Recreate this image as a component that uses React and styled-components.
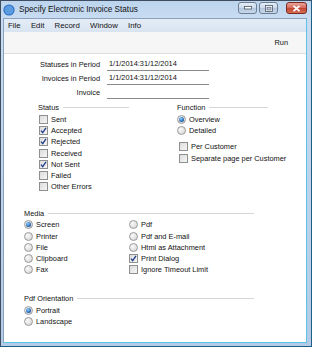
import React from 'react';
import styled, { createGlobalStyle } from 'styled-components';

const GlobalStyle = createGlobalStyle`
  html, body {
    margin: 0;
    padding: 0;
    background: #fff;
  }
  body {
    font-family: "Liberation Sans", Arial, sans-serif;
  }
`;

function Check(props) {
  const { checked } = props;
  return (
    <Box>
      {checked && (
        <svg width="7" height="7" viewBox="0 0 7 7">
          <path d="M1 3.6 L2.7 5.6 L6 0.8" fill="none" stroke="#1f3d8a" strokeWidth="1.3" />
        </svg>
      )}
    </Box>
  );
}

function Radio(props) {
  const { checked } = props;
  return <Circle>{checked && <Dot />}</Circle>;
}

function Option(props) {
  const { type, checked, label } = props;
  return (
    <Item>
      {type === 'radio' ? <Radio checked={checked} /> : <Check checked={checked} />}
      <span>{label}</span>
    </Item>
  );
}

function App() {
  return (
    <Window>
      <GlobalStyle />
      <TitleBar>
        <svg width="12" height="12" viewBox="0 0 12 12">
          <circle cx="6" cy="6" r="5.6" fill="#2a6bc4" />
          <circle cx="6" cy="6" r="4.6" fill="#5b9be0" />
          <path d="M3.2 3.4 A4 4 0 0 0 8.8 9.2 A3.2 3.2 0 0 1 3.2 3.4 Z" fill="#fff" />
        </svg>
        <Title>Specify Electronic Invoice Status</Title>
        <Controls>
          <CtrlButton>
            <svg width="8" height="4" viewBox="0 0 8 4">
              <rect x="0.5" y="0.5" width="7" height="2.5" fill="#fff" stroke="#4a5868" strokeWidth="0.8" />
            </svg>
          </CtrlButton>
          <CtrlButton>
            <svg width="8" height="7" viewBox="0 0 8 7">
              <rect x="0.5" y="0.5" width="7" height="6" fill="#fff" stroke="#4a5868" strokeWidth="0.8" />
              <rect x="2" y="2.2" width="4" height="2.8" fill="#b8c8da" stroke="#4a5868" strokeWidth="0.6" />
            </svg>
          </CtrlButton>
          <CloseButton>
            <svg width="9" height="7" viewBox="0 0 9 7">
              <path d="M1.5 0.8 L7.5 6.2 M7.5 0.8 L1.5 6.2" stroke="#fff" strokeWidth="1.8" />
            </svg>
          </CloseButton>
        </Controls>
      </TitleBar>

      <Client>
        <MenuBar>
          <span>File</span>
          <span>Edit</span>
          <span>Record</span>
          <span>Window</span>
          <span>Info</span>
        </MenuBar>
        <Toolbar>
          <span>Run</span>
        </Toolbar>

        <Content>
          <Fields>
            <Label>Statuses in Period</Label>
            <Field>1/1/2014:31/12/2014</Field>
            <Label>Invoices in Period</Label>
            <Field>1/1/2014:31/12/2014</Field>
            <Label>Invoice</Label>
            <Field />
          </Fields>

          <Columns>
            <Group>
              <Header width={91}>Status</Header>
              <List indent={1}>
                <Option label="Sent" />
                <Option label="Accepted" checked />
                <Option label="Rejected" checked />
                <Option label="Received" />
                <Option label="Not Sent" checked />
                <Option label="Failed" />
                <Option label="Other Errors" />
              </List>
            </Group>
            <Group>
              <Header width={91}>Function</Header>
              <List>
                <Option type="radio" label="Overview" checked />
                <Option type="radio" label="Detailed" />
              </List>
              <Spacer />
              <List indent={2}>
                <Option label="Per Customer" />
                <Option label="Separate page per Customer" />
              </List>
            </Group>
          </Columns>

          <Section top={15}>
            <Header width={230}>Media</Header>
            <Grid>
              <List>
                <Option type="radio" label="Screen" checked />
                <Option type="radio" label="Printer" />
                <Option type="radio" label="File" />
                <Option type="radio" label="Clipboard" />
                <Option type="radio" label="Fax" />
              </List>
              <List>
                <Option type="radio" label="Pdf" />
                <Option type="radio" label="Pdf and E-mail" />
                <Option type="radio" label="Html as Attachment" />
                <Option label="Print Dialog" checked />
                <Option label="Ignore Timeout Limit" />
              </List>
            </Grid>
          </Section>

          <Section top={17.5}>
            <Header width={230}>Pdf Orientation</Header>
            <List>
              <Option type="radio" label="Portrait" checked />
              <Option type="radio" label="Landscape" />
            </List>
          </Section>
        </Content>
      </Client>
    </Window>
  );
}

const Window = styled.div`
  width: 312px;
  height: 347px;
  box-sizing: border-box;
  display: flex;
  flex-direction: column;
  background: linear-gradient(180deg, #bcd4ee 0px, #c9dcf1 18px, #b3cbe6 100%);
  border: 1px solid #3e4e60;
  border-right-color: #1f5f86;
  border-bottom-color: #1f5f86;
`;

const TitleBar = styled.div`
  height: 17px;
  display: flex;
  align-items: center;
  padding-left: 2px;
  svg {
    flex: none;
  }
`;

const Title = styled.div`
  margin-left: 4px;
  font-size: 8.2px;
  color: #111;
  flex: 1;
`;

const Controls = styled.div`
  display: flex;
  align-items: flex-start;
  align-self: flex-start;
  margin-top: 1px;
  margin-right: 4px;
`;

const CtrlButton = styled.div`
  width: 19px;
  height: 12px;
  box-sizing: border-box;
  margin-right: 2px;
  border: 1px solid #6d7f93;
  border-radius: 3px;
  background: linear-gradient(180deg, #e6eef8 0%, #c9d8ea 50%, #b4c6dc 51%, #c8d8ea 100%);
  display: flex;
  align-items: center;
  justify-content: center;
`;

const CloseButton = styled(CtrlButton)`
  width: 21px;
  margin-left: 6px;
  margin-right: 0;
  border-color: #7a2a22;
  background: linear-gradient(180deg, #e8a497 0%, #d5675a 50%, #c2442f 51%, #d56e52 100%);
`;

const Client = styled.div`
  flex: 1;
  display: flex;
  flex-direction: column;
  margin: 0 4px 3px 2px;
  border: 1px solid #8aa2bd;
  border-right-color: #5cc2e8;
  border-bottom-color: #5cc2e8;
  background: #fff;
`;

const MenuBar = styled.div`
  height: 13px;
  display: flex;
  align-items: center;
  gap: 10.3px;
  padding-left: 4px;
  font-size: 7.8px;
  color: #111;
  background: linear-gradient(180deg, #e4ecf6, #d9e4f1);
`;

const Toolbar = styled.div`
  height: 21px;
  display: flex;
  align-items: center;
  justify-content: flex-end;
  padding-right: 18px;
  font-size: 7.4px;
  color: #111;
  background: #f6f6f6;
  border-bottom: 1px solid #dedede;
`;

const Content = styled.div`
  flex: 1;
  background: #fff;
  font-size: 7.4px;
  color: #111;
  padding-top: 4px;
`;

const Fields = styled.div`
  display: grid;
  grid-template-columns: 96px 102px;
  column-gap: 7px;
  grid-auto-rows: 14px;
`;

const Label = styled.div`
  text-align: right;
  line-height: 14px;
`;

const Field = styled.div`
  line-height: 12px;
  height: 12px;
  padding-left: 2px;
  border-bottom: 1px solid #8a8a8a;
`;

const Columns = styled.div`
  display: flex;
  gap: 48px;
  margin-top: 2px;
  padding-left: 34px;
`;

const Group = styled.div``;

const Header = styled.div`
  display: flex;
  align-items: center;
  height: 11px;
  width: ${p => p.width}px;
  white-space: nowrap;
  &::after {
    content: '';
    flex: 1;
    margin-left: 4px;
    height: 1px;
    background: #d6d6d6;
  }
`;

const List = styled.div`
  padding-left: ${p => p.indent || 0}px;
  margin-top: 0.5px;
`;

const Spacer = styled.div`
  height: 4.5px;
`;

const Item = styled.div`
  display: flex;
  align-items: center;
  height: 11.3px;
  gap: 2px;
  white-space: nowrap;
`;

const Box = styled.div`
  width: 9px;
  height: 9px;
  box-sizing: border-box;
  border: 1px solid #8e8f8f;
  background: linear-gradient(135deg, #dcdcdc, #f6f6f6);
  display: flex;
  align-items: center;
  justify-content: center;
  margin-right: 1px;
  flex: none;
`;

const Circle = styled.div`
  width: 9px;
  height: 9px;
  box-sizing: border-box;
  border-radius: 50%;
  border: 1px solid #9a9a9a;
  background: radial-gradient(circle at 35% 35%, #fafafa, #d0d0d0);
  display: flex;
  align-items: center;
  justify-content: center;
  margin-right: 1px;
  flex: none;
`;

const Dot = styled.div`
  width: 5px;
  height: 5px;
  border-radius: 50%;
  background: radial-gradient(circle at 40% 35%, #8fd0ff, #1a5aa8 70%, #123f7a);
`;

const Section = styled.div`
  margin-top: ${p => p.top}px;
  margin-left: 20px;
`;

const Grid = styled.div`
  display: grid;
  grid-template-columns: 105px 120px;
`;

export default App;
